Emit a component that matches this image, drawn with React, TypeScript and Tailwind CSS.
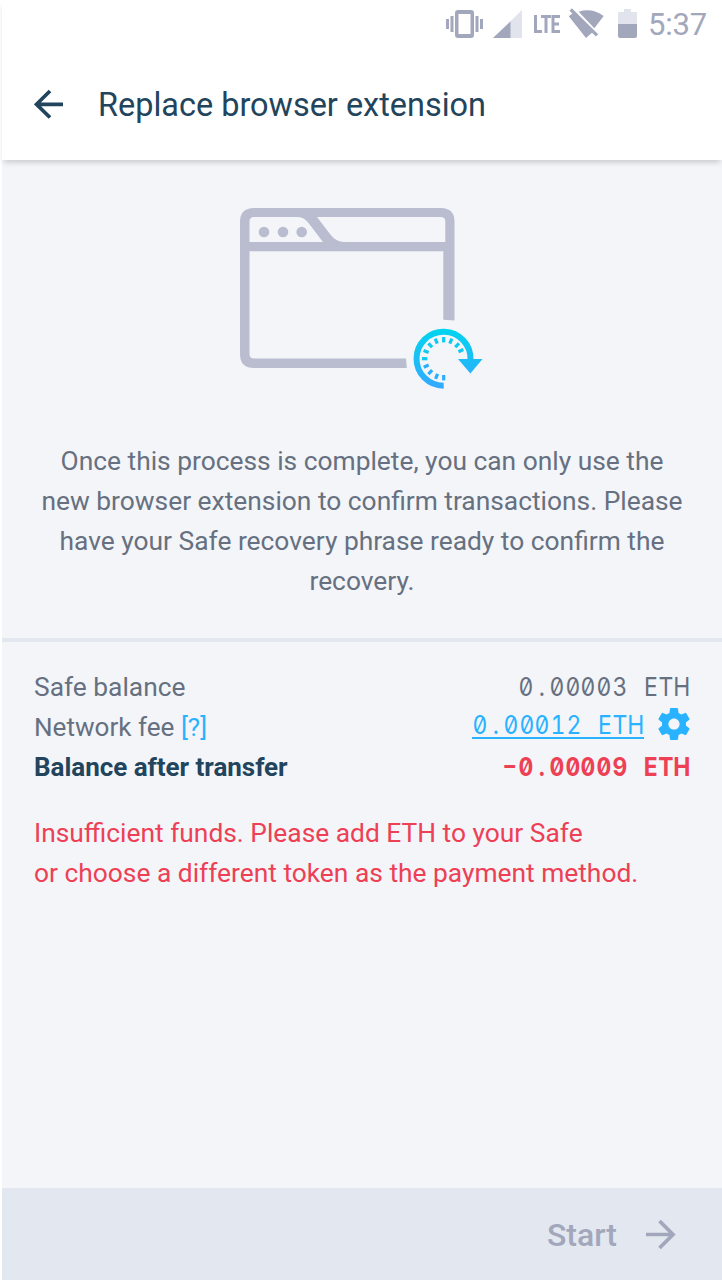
function StatusBar() {
  return (
    <div className="flex h-12 items-center justify-end text-[#a2a7bb]">
      <svg className="mr-[8px] h-12 w-[41px]" viewBox="444 0 41 48" fill="currentColor">
        <path fillRule="evenodd" d="M458 10h13q3 0 3 3v22q0 3-3 3h-13q-3 0-3-3V13q0-3 3-3Zm.5 4v20h12V14Z" />
        <path d="M446 19h3v10h-3zM450.500 16h3v16h-3zM475.500 16h3v16h-3zM480 19h3v10h-3z" />
      </svg>
      <svg className="mr-[10px] h-12 w-[29px]" viewBox="493 0 29 48">
        <path fill="#e1e4ed" d="M522 10v28h-29z" />
        <path fill="currentColor" d="M510.500 21.500V38H493z" />
      </svg>
      <svg className="mr-[8px] h-12 w-[28px]" viewBox="532 0 28 48" fill="none" stroke="currentColor" strokeWidth="3">
        <path d="M535.500 15v16.500h6.500M541 16.500h10M546 16.500V33M560 16.500h-7v15h7M553 24h6" />
      </svg>
      <svg className="mr-[14px] h-12 w-[36px]" viewBox="568 0 36 48" fill="currentColor">
        <path d="M578.700 11.700Q592 7.500 603.700 16L594.300 28.200zM568.800 16.200l5.500-4.200 19 19.500L586 38z" />
        <path d="m569.500 10.700 2.300-2.400 26.400 25.900-2.300 2.300z" />
      </svg>
      <svg className="mr-[11px] h-12 w-[19px]" viewBox="618 0 19 48">
        <path fill="#e1e4ed" d="M624 9h7v3h6v12h-19V12h6z" />
        <path fill="currentColor" d="M618 24h19v12q0 2-2 2h-15q-2 0-2-2z" />
      </svg>
      <span className="mr-[15px] pt-px text-[31px] leading-[47px] tracking-[-0.200px]">5:37</span>
    </div>
  );
}

const ticks = [180, 202, 225, 247, 270, 292, 315, 337, 0, 22, 45, 65];

function BrowserRecovery() {
  return (
    <svg className="h-[192px] w-[248px]" viewBox="238 204 248 192">
      <defs>
        <linearGradient id="recovery" gradientUnits="userSpaceOnUse" x1="0" y1="328" x2="0" y2="389">
          <stop offset="0" stopColor="#00d5ee" />
          <stop offset="1" stopColor="#35a8ff" />
        </linearGradient>
      </defs>
      <path
        fill="#b9bdcf"
        d="M254 208H441Q454.500 208 454.500 222V320.500L443.300 319.700V251.300H249.500V354Q249.500 358.500 254 358.500H406L406.800 368H254Q240 368 240 354V222Q240 208 254 208Z"
      />
      <path
        fill="#f3f5f9"
        d="M254 217H298Q304 217 308.500 223L323 242H249.500V221.500Q249.500 217 254 217ZM317 217H441Q445.300 217 445.300 221.500V242H344Q336 242 330 234Z"
      />
      <g fill="#b9bdcf">
        <circle cx="264" cy="232" r="5.300" />
        <circle cx="283" cy="232" r="5.300" />
        <circle cx="301.700" cy="232" r="5.300" />
      </g>
      <path d="M443.700 385.700A27 27 0 1 1 470.500 360" fill="none" stroke="url(#recovery)" strokeWidth="6" />
      <path d="M458 359H482.500L470.400 373.500Z" fill="url(#recovery)" />
      <g strokeWidth="3.200">
        {ticks.map((angle) => {
          const a = (angle * Math.PI) / 180;
          const dx = Math.sin(a);
          const dy = -Math.cos(a);
          return (
            <path
              key={angle}
              d={`M${443.7 + dx * 16.3} ${358.7 + dy * 16.3}L${443.7 + dx * 21.7} ${358.7 + dy * 21.7}`}
              stroke={angle > 110 && angle < 250 ? "#2aafff" : "#0dcaf2"}
            />
          );
        })}
      </g>
    </svg>
  );
}

function Amount({ value }: { value: string }) {
  return (
    <span className="inline-flex text-[26px] font-['Inter',sans-serif] [font-feature-settings:'zero','tnum','case']">
      {value.split("").map((char, i) => (
        <span
          key={i}
          className={
            char === "-"
              ? "inline-flex w-[15.6px] scale-x-[1.25] justify-center"
              : "inline-flex w-[15.6px] scale-x-[0.88] justify-center whitespace-pre"
          }
        >
          {char}
        </span>
      ))}
    </span>
  );
}

export default function App() {
  return (
    <div className="flex h-[1280px] w-[722px] flex-col overflow-hidden bg-white pl-[2px] font-['Roboto',sans-serif] text-[26.35px] leading-[40px] text-[#667080]">
      <header className="z-10 h-[160px] bg-white shadow-[0_4px_6px_-2px_rgba(0,0,0,0.2)]">
        <StatusBar />
        <div className="flex h-[112px] items-center pl-8 text-[#22445c]">
          <svg className="mr-[35px] h-[30px] w-[29px]" viewBox="34 89 29 30" fill="none" stroke="currentColor" strokeWidth="3.700">
            <path d="M63 104.300H37M50 91 36.500 104.300 50 117.500" />
          </svg>
          <h1 className="pt-[2px] text-[32.45px]">Replace browser extension</h1>
        </div>
      </header>
      <main className="flex flex-1 flex-col bg-[#f3f5f9]">
        <section className="flex h-[482px] flex-col items-center border-b-4 border-[#e3e8f0] pt-[44px]">
          <BrowserRecovery />
          <p className="mt-[45px] text-center">
            Once this process is complete, you can only use the
            <br />
            new browser extension to confirm transactions. Please
            <br />
            have your Safe recovery phrase ready to confirm the
            <br />
            recovery.
          </p>
        </section>
        <section className="pt-[25px] pr-[32.5px] pl-8">
          <div className="flex justify-between">
            <span>Safe balance</span>
            <Amount value="0.00003 ETH" />
          </div>
          <div className="flex justify-between">
            <span className="text-[26.1px]">Network fee <span className="text-[#29b2ff]">[?]</span></span>
            <div className="flex h-9 items-center text-[#29b2ff]">
              <span className="flex h-[28px] border-b-2 border-[#29b2ff] leading-[28px]"><Amount value="0.00012 ETH" /></span>
              <svg className="mb-[2px] ml-[14px] h-8 w-8" viewBox="2 2 20 20" fill="currentColor">
                <path d="M19.430 12.980c.04-.32.07-.64.07-.98s-.03-.66-.07-.98l2.110-1.650c.19-.15.24-.42.12-.64l-2-3.460c-.12-.22-.39-.3-.61-.22l-2.490 1c-.52-.4-1.080-.73-1.690-.98l-.38-2.650C14.460 2.180 14.250 2 14 2h-4c-.25 0-.46.18-.49.42l-.38 2.650c-.61.25-1.170.59-1.690.98l-2.490-1c-.23-.09-.49 0-.61.22l-2 3.460c-.13.22-.07.49.12.64l2.110 1.650c-.04.32-.07.65-.07.98s.03.66.07.98l-2.110 1.650c-.19.15-.24.42-.12.64l2 3.460c.12.22.39.3.61.22l2.490-1c.52.4 1.080.73 1.690.98l.38 2.650c.03.24.24.42.49.42h4c.25 0 .46-.18.49-.42l.38-2.650c.61-.25 1.170-.59 1.690-.98l2.490 1c.23.09.49 0 .61-.22l2-3.460c.12-.22.07-.49-.12-.64l-2.110-1.650zM12 15.500c-1.930 0-3.500-1.570-3.500-3.500s1.570-3.500 3.500-3.500 3.500 1.570 3.500 3.500-1.570 3.500-3.500 3.500z" />
              </svg>
            </div>
          </div>
          <div className="flex justify-between font-bold">
            <span className="text-[26px] tracking-[-0.030px] text-[#22445c]">Balance after transfer</span>
            <span className="flex text-[#ee4055]"><Amount value="-0.00009 ETH" /></span>
          </div>
          <p className="mt-[26px] text-[#ee4055]">
            Insufficient funds. Please add ETH to your Safe
            <br />
            or choose a different token as the payment method.
          </p>
        </section>
      </main>
      <footer className="flex h-[92px] items-center justify-end bg-[#e3e8f0] pr-[46px] text-[#a2a7bb]">
        <button className="flex items-center text-[32px] font-medium">
          <span className="pt-px">Start</span>
          <svg className="ml-[29px] h-[30px] w-[30px]" viewBox="646 1219 30 30" fill="none" stroke="currentColor" strokeWidth="3.700">
            <path d="M646 1234.500H672M659.500 1221 673 1234.500 659.500 1248" />
          </svg>
        </button>
      </footer>
    </div>
  );
}
